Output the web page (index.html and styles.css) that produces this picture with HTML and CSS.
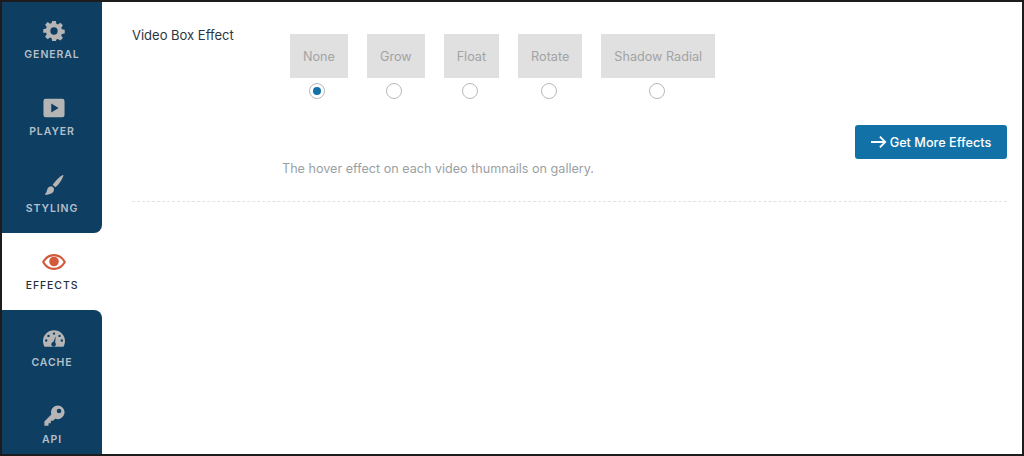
FILE: index.html
```html
<!DOCTYPE html>
<html lang="en">
<head>
<meta charset="utf-8">
<title>Video Box Effect</title>
<link rel="stylesheet" href="styles.css">
</head>
<body>
<div class="frame">
  <nav class="sidebar">
    <div class="tabs tabs-top">
      <a class="tab">
        <svg class="icon" viewBox="0 0 24 24"><path fill-rule="evenodd" d="M10 1h4l.6 3.100 1.700.7 2.600-1.800 2.800 2.800-1.800 2.600.7 1.700 3.100.6v4l-3.100.6-.7 1.700 1.800 2.600-2.800 2.800-2.600-1.800-1.700.7L14 23h-4l-.6-3.100-1.700-.7-2.600 1.800-2.800-2.800 1.800-2.600-.7-1.700L.3 14v-4l3.100-.6.7-1.700L2.300 5.100l2.800-2.800 2.600 1.800 1.700-.7zM12 8a4 4 0 1 0 0 8 4 4 0 0 0 0-8z"/></svg>
        <span>GENERAL</span>
      </a>
      <a class="tab">
        <svg class="icon" viewBox="0 0 24 24"><path fill-rule="evenodd" d="M3 2h18a2.500 2.500 0 0 1 2.500 2.500v15A2.500 2.500 0 0 1 21 22H3a2.500 2.500 0 0 1-2.500-2.500v-15A2.500 2.500 0 0 1 3 2zm6 5v10l8-5z"/></svg>
        <span>PLAYER</span>
      </a>
      <a class="tab">
        <svg class="icon" viewBox="0 0 24 24"><path d="M21.500 1c.6-.2 1 .3.8.9C20.500 6.500 17.500 11.500 13.500 14.500L10.500 11.800C13.500 7.500 17.500 3 21.500 1zM8 13.500c2-.2 3.800 1.200 4 3 .2 3.500-3.500 6-9.500 6-.5 0-.7-.4-.3-.7C5 20 3.500 14.500 8 13.500z"/></svg>
        <span>STYLING</span>
      </a>
    </div>
    <div class="tabs-active">
      <a class="tab tab-current">
        <svg class="icon" viewBox="0 0 24 24"><path fill-rule="evenodd" d="M12 4c5.500 0 9.800 3.600 12 8-2.200 4.400-6.500 8-12 8S2.200 16.400 0 12c2.200-4.400 6.500-8 12-8zm0 2.200C8 6.200 4.500 8.400 2.400 12c2.100 3.600 5.600 5.800 9.600 5.800s7.500-2.200 9.600-5.800C19.500 8.400 16 6.200 12 6.200z"/><circle cx="12" cy="11.500" r="4.800"/></svg>
        <span>EFFECTS</span>
      </a>
    </div>
    <div class="tabs tabs-bottom">
      <a class="tab">
        <svg class="icon" viewBox="0 0 24 24"><path fill-rule="evenodd" d="M12 2.500c6.600 0 12 5.200 12 11.800 0 2.300-.6 4.400-1.700 6.200H1.700C.6 18.700 0 16.600 0 14.300 0 7.700 5.400 2.500 12 2.500zM12 4.800a1.300 1.300 0 1 0 0 2.600 1.300 1.300 0 0 0 0-2.600zM6 7.300a1.300 1.300 0 1 0 0 2.600 1.300 1.300 0 0 0 0-2.600zm12 0a1.300 1.300 0 1 0 0 2.600 1.300 1.300 0 0 0 0-2.600zM3.500 12.300a1.300 1.300 0 1 0 0 2.600 1.300 1.300 0 0 0 0-2.600zm17 0a1.300 1.300 0 1 0 0 2.600 1.300 1.300 0 0 0 0-2.600zM14 9l-2.800 6.300a2.500 2.500 0 1 0 2 .6z"/></svg>
        <span>CACHE</span>
      </a>
      <a class="tab">
        <svg class="icon" viewBox="0 0 24 24"><path fill-rule="evenodd" d="M16 .5a7.500 7.500 0 1 1-2.700 14.500L11 17.300H8.500v2.500H6v2.700H1.500V18l7.600-7.700A7.500 7.500 0 0 1 16 .5zm1.500 3.500a2.500 2.500 0 1 0 0 5 2.500 2.500 0 0 0 0-5z"/></svg>
        <span>API</span>
      </a>
    </div>
  </nav>
  <main class="content">
    <section class="field">
      <div class="field-label">Video Box Effect</div>
      <div class="field-body">
        <div class="options">
          <label class="option"><span class="option-box">None</span><span class="radio radio-on"></span></label>
          <label class="option"><span class="option-box">Grow</span><span class="radio"></span></label>
          <label class="option"><span class="option-box">Float</span><span class="radio"></span></label>
          <label class="option"><span class="option-box">Rotate</span><span class="radio"></span></label>
          <label class="option"><span class="option-box">Shadow Radial</span><span class="radio"></span></label>
        </div>
        <div class="action">
          <a class="button">
            <svg class="arrow" viewBox="0 0 18 14"><path d="M0 7h16M10 1l6 6-6 6"/></svg>Get More Effects
          </a>
        </div>
        <p class="hint">The hover effect on each video thumnails on gallery.</p>
      </div>
    </section>
  </main>
</div>
</body>
</html>
```
FILE: styles.css
```css
* {
  box-sizing: border-box;
}

html,
body {
  margin: 0;
  padding: 0;
  background: #fff;
}

body {
  font-family: Inter, "Liberation Sans", sans-serif;
}

.frame {
  display: flex;
  width: 1024px;
  height: 456px;
  border: 2px solid #1c1c1c;
  overflow: hidden;
  background: #fff;
}

.sidebar {
  flex: 0 0 100px;
  display: flex;
  flex-direction: column;
}

.tabs {
  background: #0e3f63;
  flex: none;
}

.tabs-top {
  border-bottom-right-radius: 8px;
}

.tabs-bottom {
  border-top-right-radius: 8px;
}

.tab {
  display: flex;
  flex-direction: column;
  align-items: center;
  height: 77px;
  padding-top: 18px;
  color: #b4bfca;
  font-size: 10.5px;
  font-weight: 600;
  letter-spacing: 0.9px;
  line-height: 14px;
}

.icon {
  display: block;
  width: 22px;
  height: 22px;
  margin: 0 0 6px 3px;
  fill: #b5b5b5;
}

.tab-current {
  color: #23303c;
  font-weight: 500;
}

.tab-current .icon {
  fill: #d2593a;
  width: 24px;
  height: 24px;
  margin: -1px 0 5px 3px;
}

.content {
  flex: 1;
  padding: 0 15px 0 30px;
}

.field {
  display: flex;
  padding-top: 23px;
  height: 200px;
  border-bottom: 1px dashed #e2e2e2;
}

.field-label {
  flex: 0 0 150px;
  padding-top: 2px;
  font-size: 13px;
  line-height: 16px;
  color: #2b3642;
}

.field-body {
  flex: 1;
}

.options {
  display: flex;
  gap: 19px;
  margin: 9px 0 0 8px;
}

.option {
  display: flex;
  flex-direction: column;
  align-items: center;
}

.option-box {
  display: block;
  height: 44px;
  padding: 1px 13px 0;
  background: #e0e0e0;
  color: #a3a3a3;
  font-size: 12.65px;
  line-height: 43px;
}

.radio {
  display: block;
  width: 16px;
  height: 16px;
  margin: 5px 3px 0 0;
  border: 1px solid #b4b9be;
  border-radius: 50%;
  background: #fff;
  position: relative;
}

.radio-on::after {
  content: "";
  position: absolute;
  top: 3px;
  left: 3px;
  width: 8px;
  height: 8px;
  border-radius: 50%;
  background: #1272a8;
}

.action {
  display: flex;
  justify-content: flex-end;
  margin-top: 26px;
}

.button {
  display: flex;
  align-items: center;
  justify-content: center;
  gap: 3px;
  width: 152px;
  height: 34px;
  border-radius: 3px;
  background: #1272a8;
  color: #fff;
  font-size: 12.7px;
  font-weight: 500;
}

.arrow {
  width: 16px;
  height: 14px;
  fill: none;
  stroke: #fff;
  stroke-width: 2;
}

.hint {
  margin: 1px 0 0;
  font-size: 12.6px;
  line-height: 18px;
  color: #9a9fa4;
}
```
